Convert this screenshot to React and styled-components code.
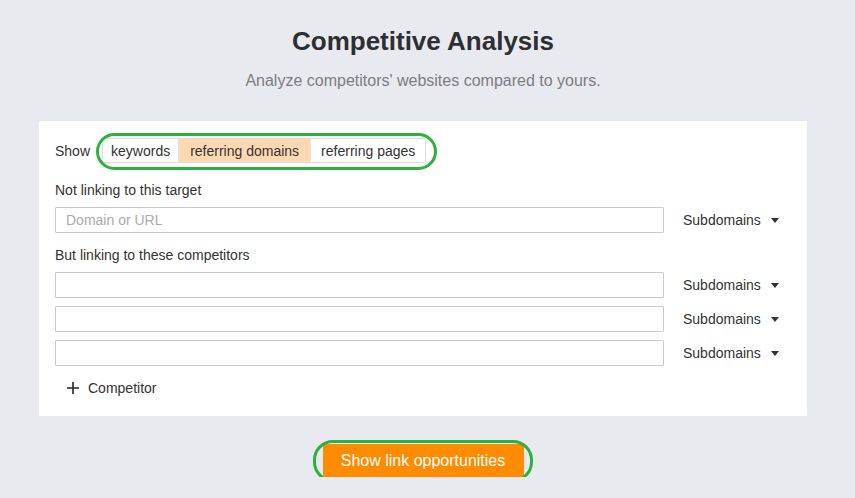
import React from "react";
import styled, { createGlobalStyle } from "styled-components";

const GlobalStyle = createGlobalStyle`
  html, body {
    margin: 0;
    padding: 0;
    background: #e9eaef;
    font-family: "Liberation Sans", Arial, sans-serif;
    color: #333;
  }
`;

const Page = styled.div`
  width: 768px;
  margin-left: 39px;
  padding-top: 25px;
  display: flex;
  flex-direction: column;
  align-items: center;
`;

const Title = styled.h1`
  margin: 0;
  font-size: 26px;
  line-height: 32px;
  font-weight: bold;
  color: #2e2f33;
`;

const Subtitle = styled.p`
  margin: 0;
  margin-top: 14px;
  font-size: 16px;
  line-height: 20px;
  color: #7c7d82;
`;

const Card = styled.div`
  align-self: stretch;
  margin-top: 30px;
  background: #fff;
  padding: 17px 16px 20px 16px;
  display: flex;
  flex-direction: column;
`;

const ShowRow = styled.div`
  display: flex;
  align-items: center;
  gap: 12px;
  font-size: 14px;
`;

const Highlight = styled.div`
  position: relative;
  display: flex;
  &::after {
    content: "";
    position: absolute;
    left: -6px;
    right: -11px;
    top: -5px;
    bottom: -7px;
    border: 3px solid #2cb13d;
    border-radius: 20px;
    pointer-events: none;
  }
`;

const Segments = styled.div`
  display: flex;
  border: 1px solid #dcdcdc;
  border-radius: 2px;
  height: 23px;
`;

const Segment = styled.div`
  display: flex;
  align-items: center;
  padding: 0 ${(p) => p.$pad}px;
  background: ${(p) => (p.$active ? "#fed8b1" : "#fff")};
  color: #333;
  border-left: ${(p) => (p.$first ? "none" : "1px solid #e2e2e2")};
  font-size: 14px;
`;

const Label = styled.div`
  font-size: 14px;
  line-height: 16px;
  color: #333;
  margin-top: ${(p) => p.$top}px;
  margin-bottom: 9px;
`;

const FieldRow = styled.div`
  display: flex;
  align-items: center;
  margin-bottom: 8px;
`;

const Input = styled.input`
  width: 609px;
  height: 26px;
  box-sizing: border-box;
  border: 1px solid #c9c9c9;
  border-radius: 1px;
  padding: 0 10px;
  font-family: inherit;
  font-size: 14px;
  color: #333;
  outline: none;
  &::placeholder {
    color: #ababab;
  }
`;

const Select = styled.div`
  display: flex;
  align-items: center;
  margin-left: 19px;
  font-size: 14px;
  color: #333;
  gap: 10px;
`;

const Caret = styled.span`
  width: 0;
  height: 0;
  border-left: 4px solid transparent;
  border-right: 4px solid transparent;
  border-top: 5px solid #333;
`;

const AddRow = styled.div`
  display: flex;
  align-items: center;
  gap: 9px;
  margin-top: 6px;
  margin-left: 12px;
  font-size: 14px;
  line-height: 16px;
  color: #333;
`;

const ButtonWrap = styled.div`
  position: relative;
  margin-top: 28px;
  &::after {
    content: "";
    position: absolute;
    left: -10px;
    right: -9px;
    top: -4px;
    bottom: -5px;
    border: 3px solid #2cb13d;
    border-radius: 20px;
    pointer-events: none;
  }
`;

const Button = styled.button`
  display: block;
  width: 201px;
  height: 33px;
  border: none;
  border-radius: 2px;
  background: #ff8b00;
  color: #fff;
  font-family: inherit;
  font-size: 16px;
  cursor: pointer;
`;

function Subdomains() {
  return (
    <Select>
      Subdomains <Caret />
    </Select>
  );
}

export default function App() {
  return (
    <>
      <GlobalStyle />
      <Page>
        <Title>Competitive Analysis</Title>
        <Subtitle>Analyze competitors' websites compared to yours.</Subtitle>
        <Card>
          <ShowRow>
            Show
            <Highlight>
              <Segments>
                <Segment $first $pad={8}>keywords</Segment>
                <Segment $active $pad={11}>referring domains</Segment>
                <Segment $pad={10}>referring pages</Segment>
              </Segments>
            </Highlight>
          </ShowRow>
          <Label $top={19}>Not linking to this target</Label>
          <FieldRow>
            <Input placeholder="Domain or URL" />
            <Subdomains />
          </FieldRow>
          <Label $top={6}>But linking to these competitors</Label>
          <FieldRow>
            <Input />
            <Subdomains />
          </FieldRow>
          <FieldRow>
            <Input />
            <Subdomains />
          </FieldRow>
          <FieldRow>
            <Input />
            <Subdomains />
          </FieldRow>
          <AddRow>
            <svg width="12" height="12" viewBox="0 0 12 12">
              <path d="M6 0v12M0 6h12" stroke="#222" strokeWidth="1.6" />
            </svg>
            Competitor
          </AddRow>
        </Card>
        <ButtonWrap>
          <Button>Show link opportunities</Button>
        </ButtonWrap>
      </Page>
    </>
  );
}
